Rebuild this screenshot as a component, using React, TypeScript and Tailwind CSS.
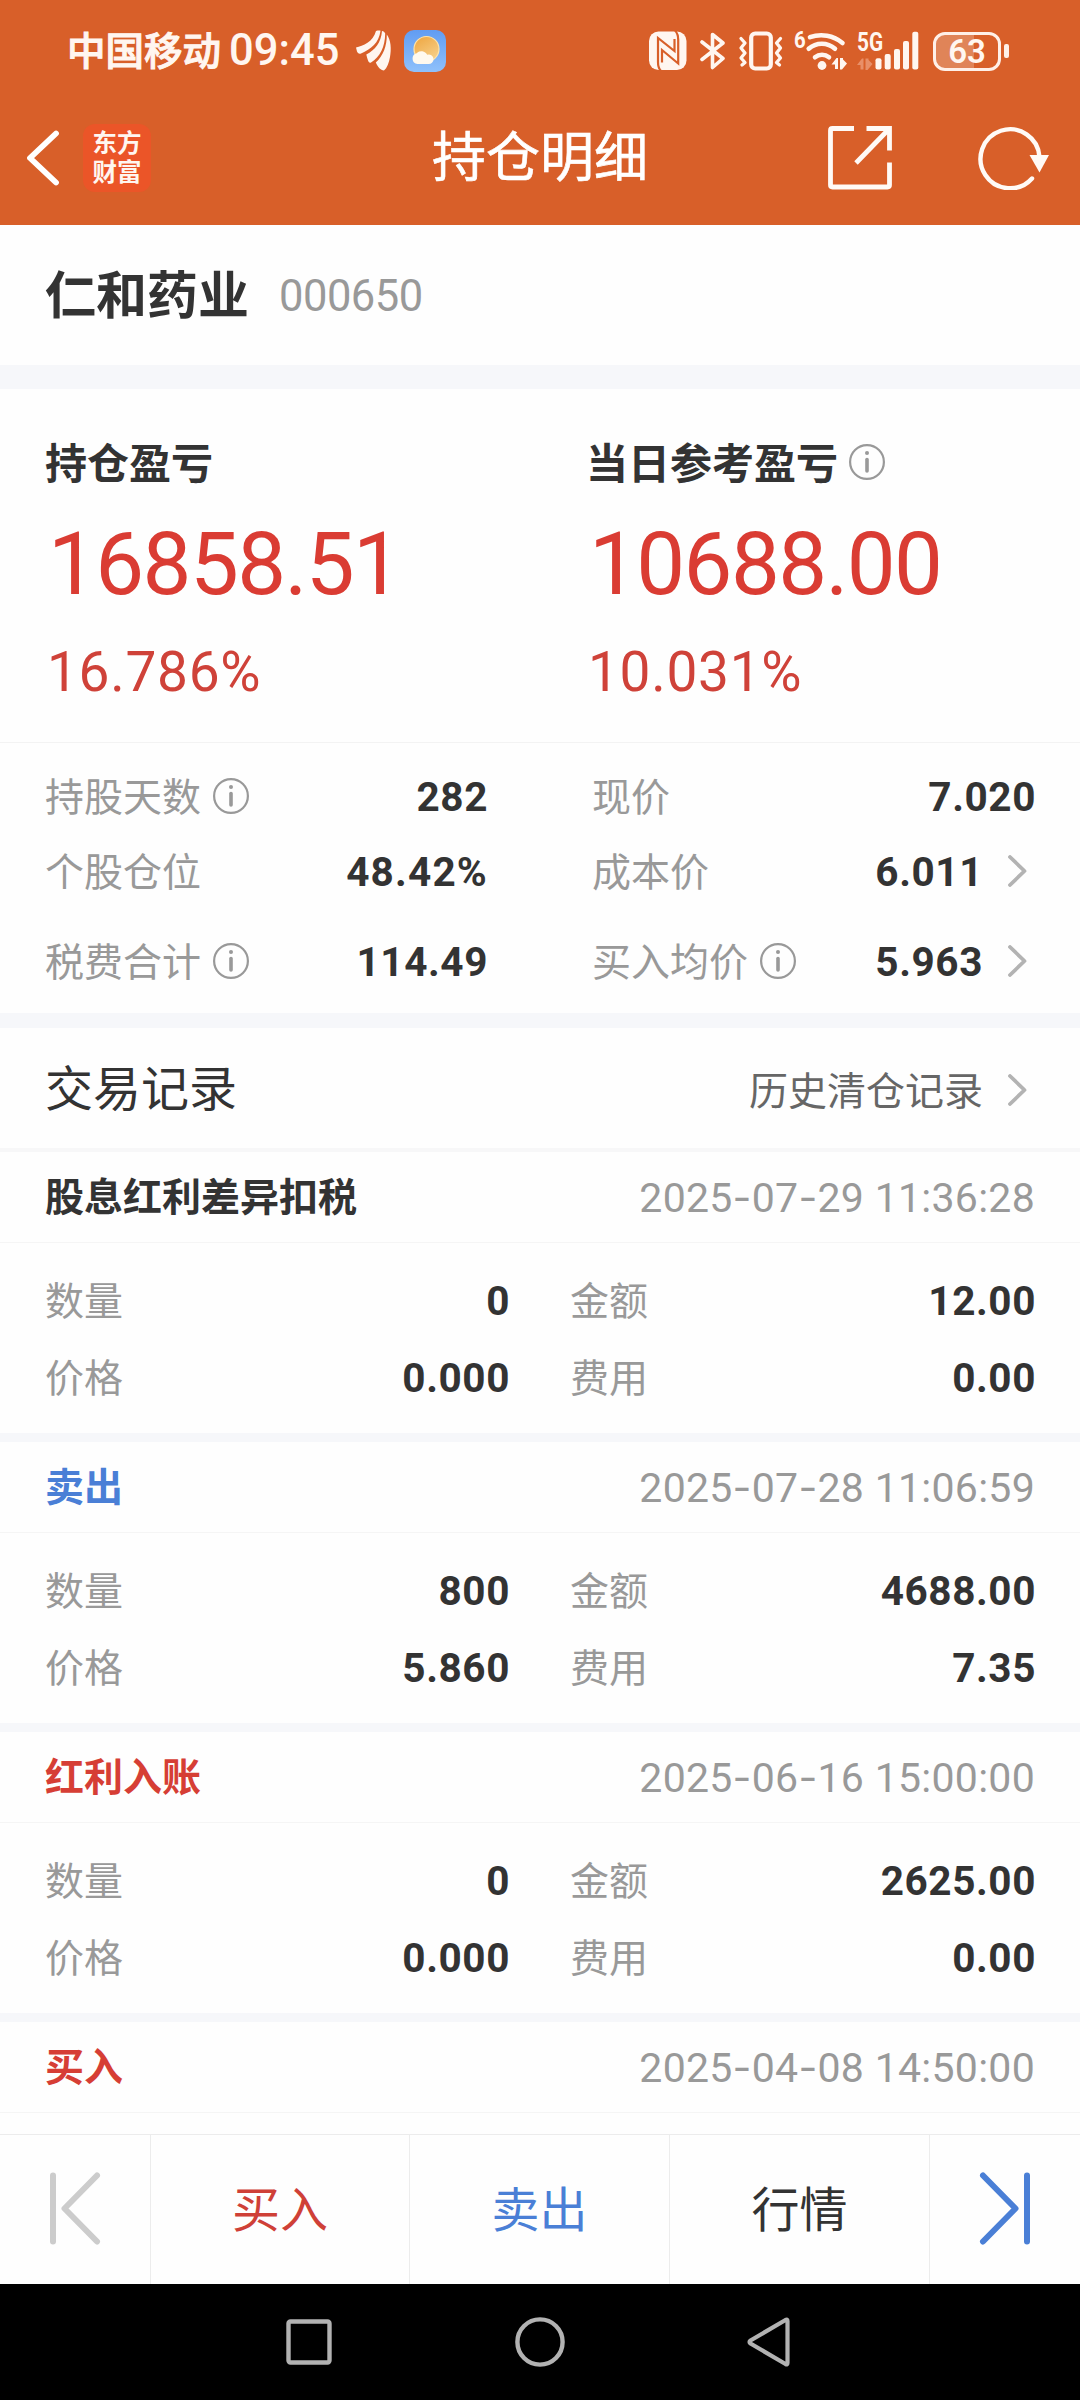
import React from "react";

type Tone = "dark" | "blue" | "red";

interface TradeRecord {
  title: string;
  tone: Tone;
  date: string;
  details?: { quantity: string; amount: string; price: string; fee: string };
}

const records: TradeRecord[] = [
  { title: "股息红利差异扣税", tone: "dark", date: "2025-07-29 11:36:28", details: { quantity: "0", amount: "12.00", price: "0.000", fee: "0.00" } },
  { title: "卖出", tone: "blue", date: "2025-07-28 11:06:59", details: { quantity: "800", amount: "4688.00", price: "5.860", fee: "7.35" } },
  { title: "红利入账", tone: "red", date: "2025-06-16 15:00:00", details: { quantity: "0", amount: "2625.00", price: "0.000", fee: "0.00" } },
  { title: "买入", tone: "red", date: "2025-04-08 14:50:00" },
];

const toneClass: Record<Tone, string> = {
  dark: "text-[#333333]",
  blue: "text-[#4a7fd6]",
  red: "text-[#d63e35]",
};

function InfoIcon({ className = "" }: { className?: string }) {
  return (
    <svg className={`h-9 w-9 shrink-0 ${className}`} viewBox="0 0 36 36" fill="none">
      <circle cx="18" cy="18" r="16.9" stroke="#999999" strokeWidth="2.2" />
      <circle cx="18" cy="9" r="2" fill="#999999" />
      <path d="M18 15.5V27" stroke="#999999" strokeWidth="3.6" strokeLinecap="round" />
    </svg>
  );
}

function ChevronRight() {
  return (
    <svg className="ml-[25px] mr-[7px] h-8 w-[19px] shrink-0" viewBox="0 0 19 32" fill="none">
      <path d="M2 2L16.5 16L2 30" stroke="#b3b3b3" strokeWidth="3.8" strokeLinecap="round" strokeLinejoin="round" />
    </svg>
  );
}

function StatusBar() {
  return (
    <div className="flex h-[102px] items-center pl-[67px] pr-[71px] text-[#fff6f0]">
      <span className="w-[162px] pt-0.5 text-[38.5px] font-medium leading-none [-webkit-text-stroke:1px_#fff6f0]">中国移动</span>
      <span className="w-[127px] whitespace-nowrap text-[43.5px] font-medium leading-none">09:45</span>
      <svg className="h-[42px] w-9" viewBox="356 31 36 42" fill="#fff6f0">
        <path d="M356 48.500C363 47 373 43 376 32C377.500 31.600 379 31.500 380.500 31.700C379 44 371 50 361 54.500C359 55.300 357.500 54 357 52.500Z" />
        <path d="M382 32C383.500 32 384.500 33 385.200 34.500C385 48 380 58 371 63.500C368.500 65 367.500 60 366.300 55.500C375 51 381 44 382 32Z" />
        <path d="M386.800 35.500C391 41 391.500 50 390 58C389 64 387 69 384 71.600C380.500 71 378 68.500 375.800 63.500C383 57 387 47 386.800 35.500Z" />
      </svg>
      <svg className="ml-3 h-[42px] w-[42px]" viewBox="0 0 42 42">
        <defs>
          <linearGradient id="sky" x1="0" y1="0" x2="0" y2="1">
            <stop offset="0" stopColor="#619cf2" />
            <stop offset="1" stopColor="#8fc1fb" />
          </linearGradient>
          <linearGradient id="sun" x1="0.2" y1="0" x2="0.8" y2="1">
            <stop offset="0" stopColor="#efa844" />
            <stop offset="1" stopColor="#f7d28d" />
          </linearGradient>
        </defs>
        <rect width="42" height="42" rx="10" fill="url(#sky)" />
        <circle cx="22.500" cy="19" r="12.500" fill="url(#sun)" stroke="#ffe3a8" strokeWidth="1.200" />
        <path d="M13.500 34a5.500 5.500 0 0 1-.8-10.800a6.500 6.500 0 0 1 10.500 1.500a4.800 4.800 0 1 1 .8 9.300z" fill="#fff9ee" />
      </svg>

      <svg className="ml-auto h-10 w-[38px]" viewBox="649.500 32 38 40" fill="none">
        <rect x="649.500" y="32.500" width="37.500" height="38.500" rx="9.500" fill="#fff6f0" />
        <path d="M661.500 72C659 69.500 658.500 67 658.500 63V39L675 52V40" stroke="#d85f29" strokeWidth="2.200" />
        <path d="M675.500 31.500C678 34 678.700 36.500 678.700 40.500V64.500L662.500 51V63.500" stroke="#d85f29" strokeWidth="2.200" />
      </svg>
      <svg className="ml-[13px] h-10 w-[26px]" viewBox="0 0 26 40" fill="none" stroke="#fff6f0" strokeWidth="3.600" strokeLinejoin="round" strokeLinecap="round">
        <path d="M2 11L23 27.500L12.500 36.500V3.500L23 12L2 28.500" />
      </svg>
      <svg className="ml-3 h-10 w-[46px]" viewBox="0 0 46 40" fill="none" stroke="#fff6f0" strokeLinejoin="round" strokeLinecap="round">
        <rect x="13.200" y="2.500" width="19.600" height="35" rx="4" strokeWidth="4.200" />
        <path d="M3 7.500L7 12L3 17L7 22L3 27L7 31.500L4 34" strokeWidth="3.300" />
        <path d="M42.500 7.500L38.500 12L42.500 17L38.500 22L42.500 27L38.500 31.500L41.500 34" strokeWidth="3.300" />
      </svg>
      <div className="relative ml-[11px] h-10 w-[52px]">
        <span className="absolute -left-px -top-[3px] origin-left scale-x-[0.85] text-[24px] font-bold leading-none">6</span>
        <svg className="h-10 w-[52px]" viewBox="795 31 52 40" fill="none" stroke="#fff6f0" strokeWidth="4.600" strokeLinecap="round">
          <path d="M810 37.200A33 33 0 0 1 842.500 43" />
          <path d="M808.700 48.800A19.500 19.500 0 0 1 835 48.800" />
          <path d="M815 57.300A11 11 0 0 1 829 57.300" />
          <circle cx="822" cy="65.500" r="4.400" fill="#fff6f0" stroke="none" />
          <path d="M838 58V69H835V64.500H831.500L836.500 58ZM840 58H843V59.500L847 63.500L842 69.500H840Z" fill="#fff6f0" stroke="none" />
        </svg>
      </div>
      <div className="relative ml-2.5 h-10 w-[62px]">
        <span className="absolute left-0 -top-[2px] origin-left scale-x-[0.8] text-[26px] font-bold leading-none">5G</span>
        <svg className="h-10 w-[62px]" viewBox="857 31 62 40" fill="#fff6f0">
          <path d="M863.500 58.500V69.500H860.500V65H857L862 58.500ZM865.500 58.500H868.500V60L872.500 64L867.500 70H865.500Z" fill="#e88f68" />
          <rect x="875.500" y="58.300" width="6" height="11.200" rx="2" />
          <rect x="884.700" y="54" width="6" height="15.500" rx="2" />
          <rect x="894" y="49" width="6" height="20.500" rx="2" />
          <rect x="903" y="41" width="6" height="28.500" rx="2" />
          <rect x="912.300" y="31.800" width="6" height="37.700" rx="2" />
        </svg>
      </div>
      <div className="ml-3.5 flex items-center">
        <div className="flex h-[39px] w-[68px] items-center justify-center rounded-[12px] border-[3.5px] border-[#fff0e8] bg-[linear-gradient(90deg,#e08458_62%,transparent_62%)] text-[33px] font-semibold leading-none">63</div>
        <div className="ml-[3px] h-3.5 w-[5px] rounded-[2px] bg-[#fff0e8]" />
      </div>
    </div>
  );
}

function TitleBar() {
  return (
    <div className="flex h-[123px] items-center pb-3">
      <svg className="ml-[26px] h-14 w-[34px]" viewBox="0 0 34 56" fill="none">
        <path d="M30 3.500L4 28L30 52.500" stroke="#ffffff" strokeWidth="5.800" strokeLinecap="round" strokeLinejoin="round" />
      </svg>
      <div className="ml-[23px] flex h-[68px] w-[68px] flex-col items-center justify-center rounded-[12px] bg-[#eb5528] text-[24.5px] font-bold leading-[29px] text-[#fff6f0]">
        <span className="block">东方</span>
        <span className="block">财富</span>
      </div>
      <h1 className="ml-[281px] w-[220px] whitespace-nowrap pt-0.5 text-[54px] leading-none text-white [-webkit-text-stroke:0.6px_#ffffff]">持仓明细</h1>
      <svg className="ml-[176px] h-16 w-16" viewBox="0 0 64 64" fill="none" stroke="#fffaf6" strokeWidth="4.800">
        <path d="M26 2.500H4.500Q2.500 2.500 2.500 4.500V59Q2.500 61 4.500 61H59.500Q61.500 61 61.500 59V36.500" />
        <path d="M38.500 2.500H61.500V24.500M61 3L28 37" />
      </svg>
      <svg className="ml-[86px] h-16 w-[72px]" viewBox="0 0 72 64" fill="none" stroke="#fffaf6" strokeWidth="4.400">
        <path d="M61.500 31A29.500 29.500 0 1 0 54 52.500" strokeLinecap="round" />
        <path d="M51.500 29H71L61.500 46.500Z" fill="#fffaf6" stroke="none" />
      </svg>
    </div>
  );
}

function Summary({ title, value, percent, info }: { title: string; value: string; percent: string; info?: boolean }) {
  return (
    <div className="flex flex-col">
      <div className="flex h-[42px] items-center">
        <h2 className="whitespace-nowrap pt-0.5 text-[42px] font-bold leading-[42px] text-[#333333]">{title}</h2>
        {info && <InfoIcon className="-mt-1 ml-[11px]" />}
      </div>
      <div className="mt-[35px] pl-[3px] text-[87px] leading-[88px] tracking-[-1.6px] text-[#da3c33]">{value}</div>
      <div className="mt-9 pl-0.5 text-[55px] leading-[56px] tracking-[0.7px] text-[#cf4239]">{percent}</div>
    </div>
  );
}

function StatRow({ label, value, info, chevron }: { label: string; value: string; info?: boolean; chevron?: boolean }) {
  return (
    <div className="flex h-10 items-center">
      <span className="whitespace-nowrap pt-[3px] text-[39px] leading-10 text-[#999999]">{label}</span>
      {info && <InfoIcon className="ml-3" />}
      <span className={`ml-auto pt-px text-[40.5px] font-bold leading-10 text-[#333333] ${value.endsWith("%") ? "tracking-[1.2px]" : "tracking-[0.6px]"} ${chevron ? "" : "-mr-0.5"}`}>
        {value}
      </span>
      {chevron && <ChevronRight />}
    </div>
  );
}

/** Timestamp whose date separators use a wider hyphen. */
function DateText({ value }: { value: string }) {
  return (
    <span className="whitespace-nowrap pt-0.5 text-[41px] leading-none tracking-[0.28px] text-[#999999]">
      {value.split("-").map((part, i) => (
        <React.Fragment key={i}>
          {i > 0 && <span className="font-['Inter']">-</span>}
          {part}
        </React.Fragment>
      ))}
    </span>
  );
}

function Field({ label, value }: { label: string; value: string }) {
  return (
    <div className="flex h-10 items-center justify-between">
      <span className="pt-[3px] text-[39px] leading-10 text-[#999999]">{label}</span>
      <span className="-mr-0.5 pt-px text-[40.5px] font-bold leading-10 tracking-[0.6px] text-[#333333]">{value}</span>
    </div>
  );
}

function RecordCard({ record }: { record: TradeRecord }) {
  return (
    <article className="shrink-0">
      <div className="flex h-[91px] items-center justify-between border-b border-[#f5f5f5] px-[45px]">
        <h3 className={`pt-[3px] text-[39px] font-bold leading-none ${toneClass[record.tone]}`}>{record.title}</h3>
        <DateText value={record.date} />
      </div>
      {record.details && (
        <>
          <div className="grid h-[190px] grid-cols-[463px_464px] content-start gap-x-[62px] gap-y-[37px] pl-[45px] pt-[37px]">
            <Field label="数量" value={record.details.quantity} />
            <Field label="金额" value={record.details.amount} />
            <Field label="价格" value={record.details.price} />
            <Field label="费用" value={record.details.fee} />
          </div>
          <div className="h-[9px] bg-[#f6f7fa]" />
        </>
      )}
    </article>
  );
}

export default function App() {
  return (
    <div className="flex h-[2400px] w-[1080px] flex-col overflow-hidden bg-[#fefefe] font-['Roboto','Noto_Sans_CJK_SC',sans-serif]">
      <header className="h-[225px] shrink-0 bg-[#d85f29]">
        <StatusBar />
        <TitleBar />
      </header>

      <section className="flex h-[140px] shrink-0 items-center pl-[45px] pt-[3px]">
        <h2 className="text-[51px] font-bold leading-none text-[#333333]">仁和药业</h2>
        <span className="ml-[30px] text-[43.5px] leading-none tracking-[-0.5px] text-[#999999]">000650</span>
      </section>
      <div className="h-6 shrink-0 bg-[#f6f7fa]" />

      <section className="grid h-[354px] shrink-0 grid-cols-[541px_1fr] border-b border-[#f3f3f3] pl-[45px] pt-[54px]">
        <Summary title="持仓盈亏" value="16858.51" percent="16.786%" />
        <Summary title="当日参考盈亏" value="10688.00" percent="10.031%" info />
      </section>

      <section className="grid h-[270px] shrink-0 grid-cols-[441px_442px] gap-x-[106px] pl-[45px] pt-[33px]">
        <div className="flex flex-col">
          <StatRow label="持股天数" value="282" info />
          <div className="h-[35px]" />
          <StatRow label="个股仓位" value="48.42%" />
          <div className="h-[50px]" />
          <StatRow label="税费合计" value="114.49" info />
        </div>
        <div className="flex flex-col">
          <StatRow label="现价" value="7.020" />
          <div className="h-[35px]" />
          <StatRow label="成本价" value="6.011" chevron />
          <div className="h-[50px]" />
          <StatRow label="买入均价" value="5.963" info chevron />
        </div>
      </section>
      <div className="h-[15px] shrink-0 bg-[#f6f7fa]" />

      <section className="flex h-[124px] shrink-0 items-center justify-between border-b-4 border-[#f7f7f8] pl-[45px] pr-[46px]">
        <h2 className="pt-[3px] text-[48px] leading-none text-[#333333]">交易记录</h2>
        <div className="flex items-center pt-1">
          <span className="whitespace-nowrap pt-1 text-[39px] leading-none text-[#666666]">历史清仓记录</span>
          <ChevronRight />
        </div>
      </section>

      <main className="flex min-h-0 grow flex-col overflow-hidden">
        {records.map((record) => (
          <RecordCard key={record.date} record={record} />
        ))}
      </main>

      <nav className="grid h-[150px] shrink-0 grid-cols-[151px_259px_260px_260px_150px] border-t border-[#ececec] bg-[#fefefe] text-[48px] leading-none">
        <div className="flex items-center border-r border-[#ececec] pb-1 pl-[49px]">
          <svg className="h-[74px] w-[52px]" viewBox="0 0 52 74" fill="none" stroke="#cccccc" strokeWidth="6" strokeLinecap="round" strokeLinejoin="round">
            <path d="M4 4.500V70.500M48 4.500L15.500 37.500L48 70.500" />
          </svg>
        </div>
        <div className="flex items-center justify-center border-r border-[#ececec] pt-[3px] text-[#cf4037]">买入</div>
        <div className="flex items-center justify-center border-r border-[#ececec] pt-[3px] text-[#4a7fd6]">卖出</div>
        <div className="flex items-center justify-center border-r border-[#ececec] pt-[3px] text-[#333333]">行情</div>
        <div className="flex items-center pb-1 pl-[49px]">
          <svg className="h-[74px] w-[52px]" viewBox="0 0 52 74" fill="none" stroke="#4a7fd6" strokeWidth="6" strokeLinecap="round" strokeLinejoin="round">
            <path d="M48 4.500V70.500M4 4.500L36.500 37.500L4 70.500" />
          </svg>
        </div>
      </nav>

      <footer className="flex h-[116px] shrink-0 items-center bg-black pl-[286px]">
        <svg className="h-[46px] w-[46px]" viewBox="0 0 46 46" fill="none">
          <rect x="2.500" y="2.500" width="41" height="41" rx="2" stroke="#b2b2b2" strokeWidth="4.400" />
        </svg>
        <svg className="ml-[183px] h-[50px] w-[50px]" viewBox="0 0 50 50" fill="none">
          <circle cx="25" cy="25" r="22.600" stroke="#b2b2b2" strokeWidth="4.400" />
        </svg>
        <svg className="ml-[182px] h-[50px] w-[44px]" viewBox="0 0 44 50" fill="none">
          <path d="M40.500 4V46Q40.500 48 38.500 47L3.500 26.500Q1.500 25 3.500 23.500L38.500 3Q40.500 2 40.500 4Z" stroke="#b2b2b2" strokeWidth="4.200" strokeLinejoin="round" />
        </svg>
      </footer>
    </div>
  );
}
